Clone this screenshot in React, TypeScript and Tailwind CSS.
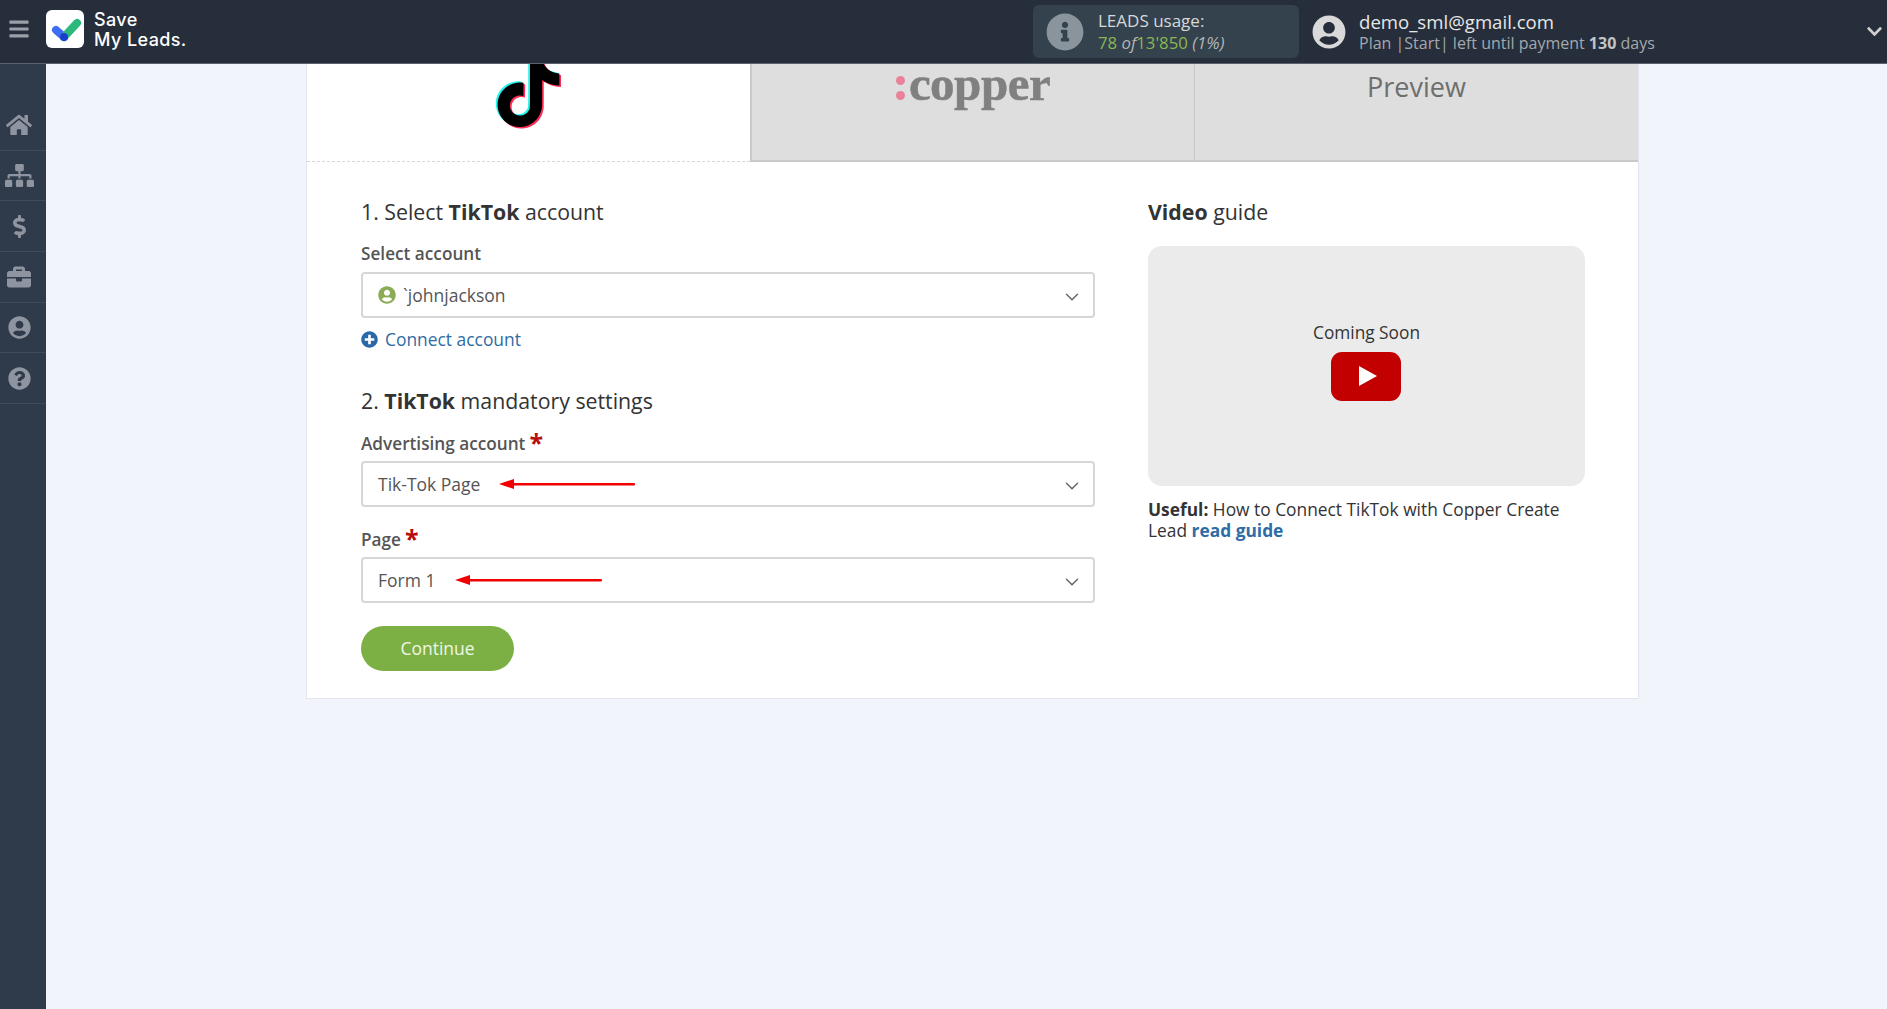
import { FaBars, FaBriefcase, FaChevronDown, FaDollarSign, FaHome, FaInfoCircle, FaPlusCircle, FaQuestionCircle, FaSitemap, FaUserCircle } from "react-icons/fa"
import { ChevronDown } from "lucide-react"

const tiktokPath =
  "M12.525.02c1.31-.02 2.61-.01 3.91-.02.08 1.53.63 3.09 1.75 4.17 1.12 1.11 2.7 1.62 4.24 1.79v4.03c-1.44-.05-2.89-.35-4.2-.97-.57-.26-1.1-.59-1.62-.93-.01 2.92.01 5.84-.02 8.75-.08 1.4-.54 2.79-1.35 3.94-1.31 1.92-3.58 3.17-5.91 3.21-1.43.08-2.86-.31-4.08-1.03-2.02-1.19-3.44-3.37-3.65-5.71-.02-.5-.03-1-.01-1.49.18-1.9 1.12-3.72 2.58-4.96 1.66-1.44 3.98-2.13 6.15-1.72.02 1.48-.04 2.96-.04 4.44-.99-.32-2.15-.23-3.02.37-.63.41-1.11 1.04-1.36 1.75-.21.51-.15 1.07-.14 1.61.24 1.64 1.82 3.02 3.5 2.87 1.12-.01 2.19-.66 2.77-1.61.19-.33.4-.67.41-1.06.1-1.79.06-3.57.07-5.36.01-4.03-.01-8.05.02-12.07z"

function TikTokLogo() {
  return (
    <svg viewBox="-1 -1 26 26" className="-mt-[11px] h-[77px] w-[77px]">
      <path d={tiktokPath} fill="#25f4ee" transform="translate(-0.6 -0.4)" />
      <path d={tiktokPath} fill="#fe2c55" transform="translate(0.55 0.5)" />
      <path d={tiktokPath} fill="#000000" />
    </svg>
  )
}

function SaveMyLeadsLogo() {
  return (
    <div className="flex h-[38px] w-[38px] shrink-0 items-center justify-center rounded-[6px] bg-white">
      <svg viewBox="0 0 38 38" className="h-[38px] w-[38px]">
        <path d="M10 20 L18 27" stroke="#3d6df2" strokeWidth="8" strokeLinecap="round" />
        <path d="M18 27 L31 13" stroke="#2cb77c" strokeWidth="8" strokeLinecap="round" />
        <circle cx="18" cy="27" r="4" fill="#1a3ccf" />
      </svg>
    </div>
  )
}

function RedArrow({ width }: { width: number }) {
  return (
    <svg width={width} height="12" viewBox={`0 0 ${width} 12`} className="shrink-0">
      <polygon points="0,6 15,1 15,11" fill="#f00000" />
      <rect x="12" y="5" width={width - 12} height="2.4" rx="1" fill="#f00000" />
    </svg>
  )
}

function SelectBox({ children }: { children: React.ReactNode }) {
  return (
    <div className="flex h-[46px] items-center justify-between rounded-[4px] border-[2.5px] border-[#d6d6d6] bg-white pr-[10px] pl-[15px] text-[17.5px] text-[#555]">
      <div className="flex items-center">{children}</div>
      <ChevronDown className="mt-[3px] size-[22px] text-[#666]" strokeWidth={1.6} />
    </div>
  )
}

function Required() {
  return <span className="relative top-[2px] ml-[4px] text-[25px] leading-[20px] font-bold text-[#b80c0c]">*</span>
}

const navIcons = [
  { icon: FaHome, size: "size-[26px]" },
  { icon: FaSitemap, size: "size-[29px]" },
  { icon: FaDollarSign, size: "size-[23px]" },
  { icon: FaBriefcase, size: "size-[24px]" },
  { icon: FaUserCircle, size: "size-[23px]" },
  { icon: FaQuestionCircle, size: "size-[23px]" },
]

export default function App() {
  return (
    <div className="flex min-h-[1009px] flex-col bg-[#f2f4fc] font-['Open_Sans',sans-serif]">
      <header className="flex h-[64px] shrink-0 items-center border-b border-[#59626e] bg-[#262e3b]">
        <div className="mb-[6px] flex items-center">
          <div className="flex w-[46px] shrink-0 items-center justify-center pr-[8px]">
            <FaBars className="size-[22px] text-[#9aa0a8]" />
          </div>
          <SaveMyLeadsLogo />
          <div className="mt-[2px] ml-[10px] w-[100px] font-['Inter',sans-serif] text-[18px] leading-[19.5px] font-medium tracking-[0.4px] text-white">
            Save
            <br />
            My Leads.
          </div>
        </div>
        <div className="ml-[839px] flex h-[53px] w-[266px] items-center rounded-[6px] bg-[#33424d] pl-[13px]">
          <FaInfoCircle className="size-[38px] text-[#8a949c]" />
          <div className="ml-[14px] text-[17px] leading-[22px] text-[#d8d8d8]">
            <div>LEADS usage:</div>
            <div className="text-[16.8px] text-[#8cb653]">
              78 <i className="text-[#b5b5b5]">of</i>13'850 <i className="text-[#b5b5b5]">(1%)</i>
            </div>
          </div>
        </div>
        <FaUserCircle className="ml-[13px] size-[34px] text-[#d9d9d9]" />
        <div className="ml-[13px]">
          <div className="text-[18.6px] leading-[24px] text-[#e6e6e6]">demo_sml@gmail.com</div>
          <div className="text-[16px] leading-[19px] text-[#a4a8ad]">
            Plan |Start| left until payment <b className="font-bold text-[#c4c4c4]">130</b> days
          </div>
        </div>
        <FaChevronDown className="ml-auto mr-[4px] size-[17px] text-[#d0d0d0]" />
      </header>

      <div className="flex flex-1">
        <nav className="w-[46px] shrink-0 bg-[#2f3b4a] pt-[36px]">
          {navIcons.map(({ icon: Icon, size }, i) => (
            <div key={i} className="flex h-[50.7px] items-center justify-center border-b border-[#414c5a] pr-[8px]">
              <Icon className={`${size} text-[#8f95a0]`} />
            </div>
          ))}
        </nav>

        <main className="flex-1 pl-[260px]">
          <div className="w-[1333px] border-x border-b border-[#e3e5ee] bg-white">
            <div className="flex h-[98px]">
              <div className="flex w-[443px] justify-center overflow-hidden border-b border-dashed border-[#d8d8d8]">
                <TikTokLogo />
              </div>
              <div className="flex w-[444px] justify-center border-b-2 border-l-2 border-[#c9c9c9] bg-[#dedede]">
                <div className="-mt-[1px] flex items-start font-['Liberation_Serif',serif] text-[49px] leading-[42px] font-bold tracking-[-0.5px] text-[#808080] [-webkit-text-stroke:0.5px_#808080]">
                  <span className="mt-[13px] mr-[4px] flex flex-col gap-[6px]">
                    <span className="size-[9px] rounded-full bg-[#e8829a]" />
                    <span className="size-[9px] rounded-full bg-[#e8829a]" />
                  </span>
                  copper
                </div>
              </div>
              <div className="flex flex-1 justify-center border-b-2 border-l border-[#c9c9c9] bg-[#dedede] pt-[4px] text-[27px] leading-[38px] text-[#6e6e6e]">
                Preview
              </div>
            </div>

            <div className="flex gap-[53px] pt-[36px] pr-[53px] pb-[27px] pl-[54px]">
              <div className="w-[734px]">
                <h2 className="text-[21.3px] leading-[28px] text-[#333]">
                  1. Select <b>TikTok</b> account
                </h2>
                <div className="mt-[16px] text-[17.2px] leading-[24px] font-semibold text-[#555]">Select account</div>
                <div className="mt-[6px]">
                  <SelectBox>
                    <FaUserCircle className="mr-[7px] size-[18px] text-[#8bac55]" />
                    `johnjackson
                  </SelectBox>
                </div>
                <div className="mt-[9px] flex items-center text-[17.4px] leading-[24px] text-[#2f6ca5]">
                  <FaPlusCircle className="mr-[7px] size-[17px] text-[#2a69a8]" />
                  Connect account
                </div>
                <h2 className="mt-[36px] text-[21.3px] leading-[28px] text-[#333]">
                  2. <b>TikTok</b> mandatory settings
                </h2>
                <div className="mt-[15px] text-[17.2px] leading-[24px] font-semibold text-[#555]">
                  Advertising account
                  <Required />
                </div>
                <div className="mt-[5px]">
                  <SelectBox>
                    Tik-Tok Page
                    <span className="ml-[19px] flex">
                      <RedArrow width={136} />
                    </span>
                  </SelectBox>
                </div>
                <div className="mt-[19px] text-[17.2px] leading-[24px] font-semibold text-[#555]">
                  Page
                  <Required />
                </div>
                <div className="mt-[5px]">
                  <SelectBox>
                    Form 1
                    <span className="ml-[20px] flex">
                      <RedArrow width={147} />
                    </span>
                  </SelectBox>
                </div>
                <button className="mt-[23px] h-[45px] w-[153px] rounded-full bg-[#7cb044] text-[17.5px] text-[#eef6e4]">
                  Continue
                </button>
              </div>

              <div className="w-[437px]">
                <h2 className="text-[21.3px] leading-[28px] text-[#333]">
                  <b>Video</b> guide
                </h2>
                <div className="mt-[20px] flex h-[240px] flex-col items-center rounded-[14px] bg-[#ebebeb] pt-[75px]">
                  <div className="text-[17.3px] leading-[24px] text-[#333]">Coming Soon</div>
                  <svg viewBox="0 0 70 49" className="mt-[7px] mr-[1px] h-[49px] w-[70px]">
                    <rect width="70" height="49" rx="11" fill="#c30000" />
                    <polygon points="28,14 28,34 46,24" fill="#ffffff" />
                  </svg>
                </div>
                <p className="mt-[13px] text-[17.35px] leading-[21px] text-[#333]">
                  <b>Useful:</b> How to Connect TikTok with Copper Create Lead{" "}
                  <b className="text-[#2f6ca5]">read guide</b>
                </p>
              </div>
            </div>
          </div>
        </main>
      </div>
    </div>
  )
}
